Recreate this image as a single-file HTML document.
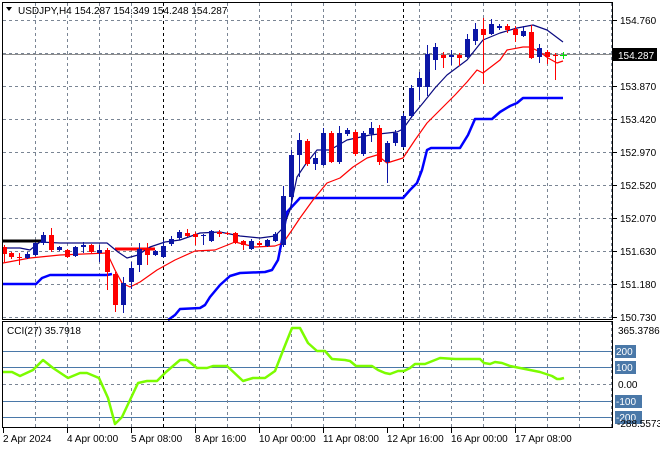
<!DOCTYPE html>
<html><head><meta charset="utf-8"><style>
body{margin:0;background:#fff;width:660px;height:450px;overflow:hidden;font-family:"Liberation Sans",sans-serif}
svg{display:block}
text{font-family:"Liberation Sans",sans-serif;font-size:10px;fill:#000}
</style></head><body>
<svg id="s" width="660" height="450" xmlns="http://www.w3.org/2000/svg">
<rect width="660" height="450" fill="#fff"/>
<g id="grid"></g>
<g id="ind"></g>
<g id="candles"></g>
<rect x="2.5" y="2.5" width="610" height="317" fill="none" stroke="#000"/>
<rect x="2.5" y="321.5" width="610" height="106" fill="none" stroke="#000"/>
<text x="18" y="14">USDJPY,H4  154.287 154.349 154.248 154.287</text>
<polygon points="6,7 12,7 9,11" fill="#000"/>
<text x="7" y="334">CCI(27) 35.7918</text>
<g id="axis"></g>
</svg>
<script>
var NS="http://www.w3.org/2000/svg";
function el(p,t,a,txt){var e=document.createElementNS(NS,t);for(var k in a)e.setAttribute(k,a[k]);if(txt!=null)e.textContent=txt;document.getElementById(p).appendChild(e);return e;}
var hy=[20,53,86,119,152,185,218,251,284,317];
hy.forEach(function(y){el('grid','line',{x1:3,x2:612,y1:y+.5,y2:y+.5,stroke:'#7a8594','stroke-dasharray':'3,3'});});
[384].forEach(function(y){el('grid','line',{x1:3,x2:612,y1:y+.5,y2:y+.5,stroke:'#7a8594','stroke-dasharray':'3,3'});});
[351,367,401,417].forEach(function(y){el('grid','line',{x1:3,x2:612,y1:y+.5,y2:y+.5,stroke:'#4a78a8'});});
for(var x=35;x<612;x+=32){if(x==163||x==387)continue;
 el('grid','line',{x1:x+.5,x2:x+.5,y1:3,y2:319,stroke:'#7a8594','stroke-dasharray':'3,3'});
 el('grid','line',{x1:x+.5,x2:x+.5,y1:322,y2:427,stroke:'#7a8594','stroke-dasharray':'3,3'});}
[163,403].forEach(function(x){
 el('grid','line',{x1:x+.5,x2:x+.5,y1:3,y2:319,stroke:'#000','stroke-dasharray':'3,3'});
 el('grid','line',{x1:x+.5,x2:x+.5,y1:322,y2:427,stroke:'#000','stroke-dasharray':'3,3'});});
el('grid','line',{x1:3,x2:612,y1:54.5,y2:54.5,stroke:'#8c8c8c'});
function pl(pts,c,w){el('ind','polyline',{points:pts,fill:'none',stroke:c,'stroke-width':w,'stroke-linejoin':'round'});}
pl('3,241 43,241','#000',3);
pl('115,249 155,249','#ff0000',3);
pl('3,284 36,284 42,278 50,275 107,275 112,274','#0000ff',2.5);
pl('168,320 175,315 180,309 200,308 205,305 210,297 220,285 230,276 240,273 265,272 272,270 278,260 282,240 287,212 300,198 403,198 410,190 417,183 422,170 427,150 431,148 460,148 468,135 475,119 492,119 500,112 510,106 517,103 523,98 563,98','#0000ff',2.5);
pl('3,248 20,248 30,250 40,242 60,243 107,243 118,252 127,258 138,255 150,247 165,242 180,240 200,233 220,232 240,236 260,238 275,236 283,228 290,210 297,177 305,165 317,150 330,150 347,140 370,135 397,132 403,129 413,115 423,103 435,88 447,75 467,60 483,40 500,33 517,28 533,25 547,30 563,42','#0a0a80',1.2);
pl('3,263 30,258 60,255 107,253 115,270 122,283 130,287 140,282 157,270 175,260 195,251 215,250 235,242 255,247 275,246 283,243 292,230 300,218 313,200 327,183 340,178 353,167 367,158 377,155 387,163 403,158 415,140 427,123 440,110 455,95 467,82 477,70 483,73 500,60 507,50 523,47 530,47 540,52 548,58 557,63 563,61','#ff0000',1.2);
pl('3,372 12,372 20,376 33,370 43,360 53,368 68,378 80,373 87,373 99,378 108,398 115,424 122,417 138,383 147,381 157,381 166,372 180,360 187,360 197,368 207,368 213,366 227,366 243,381 253,378 265,378 275,371 284,348 292,328 300,328 308,343 317,351 325,351 332,359 345,360 350,361 356,366 372,366 378,370 385,373 390,374 398,371 404,371 410,368 415,364 425,364 430,362 440,358 455,359 480,359 484,363 490,364 495,362 502,363 510,366 520,368 530,370 540,372 552,376 557,379 560,379 564,378','#7cfc00',2.5);
var C=[[4,247,254,245,262],[11,253,257,252,259],[19,257,258,253,265],[27,258,254,252,259],[35,255,243,242,256],[43,243,235,232,245],[51,235,250,228,252],[59,250,247,246,251],[67,250,257,249,258],[75,256,247,246,257],[83,247,245,242,253],[91,245,252,244,253],[99,253,250,245,262],[107,250,272,248,290],[115,274,305,272,312],[123,305,283,277,313],[131,282,268,262,289],[139,265,249,243,272],[147,248,255,243,265],[155,255,251,250,256],[163,257,246,240,258],[171,244,239,236,246],[179,238,232,230,240],[187,233,236,229,237],[195,234,237,232,245],[203,236,235,234,245],[211,241,231,230,242],[219,232,234,230,237],[227,233,234,232,235],[235,233,243,232,244],[243,241,245,240,250],[251,249,241,239,250],[259,243,245,241,247],[267,246,240,239,247],[275,241,234,232,242],[283,245,196,186,247],[291,197,155,150,205],[299,155,140,133,177],[307,141,164,139,166],[315,164,158,153,170],[323,165,133,128,166],[331,133,162,131,163],[339,162,133,126,164],[347,134,130,128,136],[355,132,154,130,156],[363,154,133,131,156],[371,134,128,122,142],[379,128,162,125,165],[387,162,143,141,183],[395,143,133,130,146],[403,147,116,113,148],[411,116,88,85,118],[419,87,78,72,100],[427,87,54,45,96],[435,60,47,43,70],[443,55,58,52,68],[451,57,55,50,65],[459,55,58,53,66],[467,57,39,34,58],[475,41,29,23,45],[483,29,35,18,84],[491,34,24,19,35],[499,28,26,24,30],[507,26,30,24,33],[515,29,35,26,42],[523,36,31,26,37],[531,32,58,25,59],[539,57,48,44,63],[547,52,57,50,64],[555,55,55,53,80]];
C.forEach(function(c){var bull=c[2]<c[1];var col=bull?'#0c16a6':'#ff0000';
 el('candles','line',{x1:c[0]+.5,x2:c[0]+.5,y1:c[3],y2:c[4],stroke:col});
 var t=Math.min(c[1],c[2]),h=Math.max(Math.abs(c[1]-c[2]),1);
 el('candles','rect',{x:c[0]-2,y:t,width:5,height:h,fill:col});});
el('candles','line',{x1:560,x2:567,y1:55.5,y2:55.5,stroke:'#00e000'});
el('candles','line',{x1:563.5,x2:563.5,y1:52,y2:59,stroke:'#00e000'});
var pr=[[20,'154.760'],[86,'153.870'],[119,'153.420'],[152,'152.970'],[185,'152.520'],[218,'152.070'],[251,'151.630'],[284,'151.180'],[317,'150.730']];
pr.forEach(function(p){el('axis','line',{x1:612,x2:617,y1:p[0]+.5,y2:p[0]+.5,stroke:'#000'});el('axis','text',{x:620,y:p[0]+4},p[1]);});
el('axis','rect',{x:613,y:48,width:44,height:13,fill:'#000'});
el('axis','text',{x:618,y:59,style:'fill:#fff'},'154.287');
el('axis','text',{x:618,y:334},'365.3786');
[[351,'200'],[367,'100'],[401,'-100'],[417,'-200']].forEach(function(p){el('axis','rect',{x:615,y:p[0]-6,width:p[1].length*6+3,height:13,fill:'#4a78a8'});el('axis','text',{x:616,y:p[0]+4,style:'fill:#fff'},p[1]);});
el('axis','text',{x:618,y:388},'0.00');
el('axis','text',{x:617,y:427},'-288.5573');
var tl=['2 Apr 2024','4 Apr 00:00','5 Apr 08:00','8 Apr 16:00','10 Apr 00:00','11 Apr 08:00','12 Apr 16:00','16 Apr 00:00','17 Apr 08:00'];
tl.forEach(function(t,i){var x=3+i*64;el('axis','line',{x1:x+.5,x2:x+.5,y1:428,y2:433,stroke:'#000'});el('axis','text',{x:x,y:442},t);});
</script>
</body></html>
